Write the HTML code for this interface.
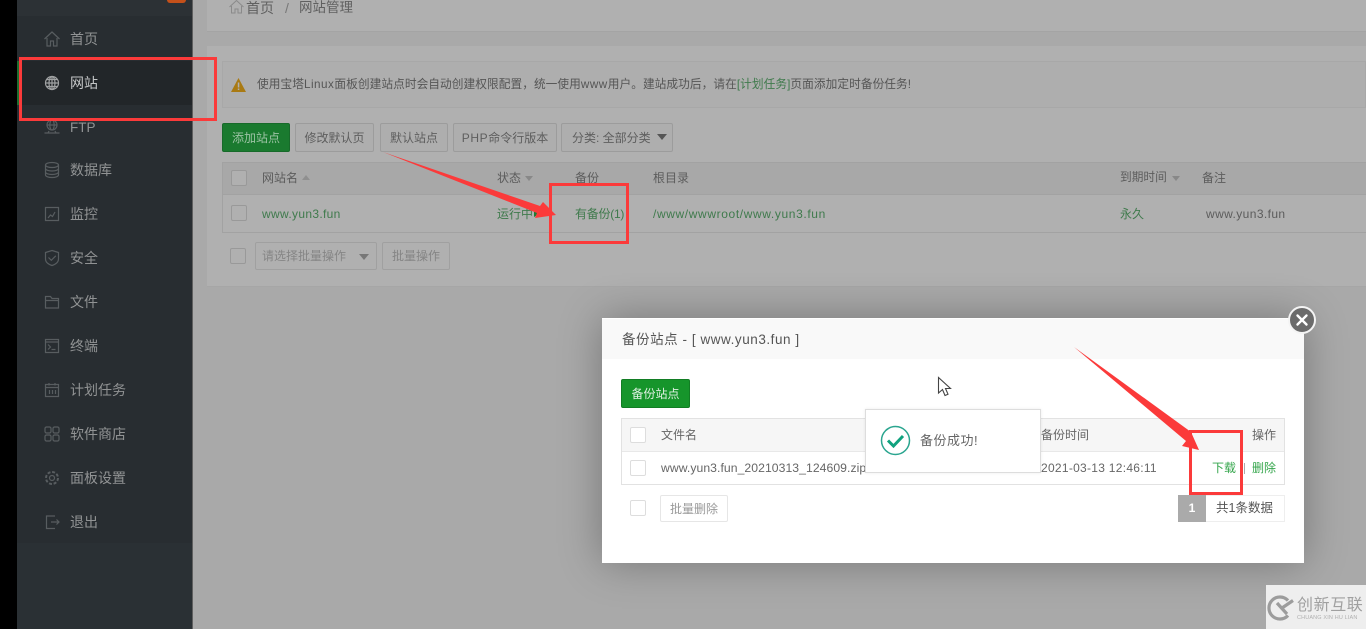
<!DOCTYPE html>
<html lang="zh">
<head>
<meta charset="utf-8">
<title>网站管理</title>
<style>
html{margin:0;padding:0;width:1366px;height:629px;overflow:hidden;background:#a9a9a9;}
body{margin:0;padding:0;width:1366px;height:629px;overflow:hidden;position:relative;font-family:"Liberation Sans","Noto Sans CJK SC",sans-serif;font-size:12px;color:#5c5c5c;filter:blur(.35px);}
.a{position:absolute;white-space:nowrap;box-sizing:border-box;}
.t{line-height:16px;}
.nav{color:#919394;font-size:14px;left:70px;line-height:20px;}
.ni{position:absolute;left:43px;width:18px;height:18px;fill:none;stroke:#585d60;stroke-width:1.2;}
.btn{border:1px solid #9c9c9c;border-radius:2px;text-align:center;line-height:28px;height:29px;color:#5e5e5e;background:#aeaeae;}
.cb{width:16px;height:16px;border:1px solid #999;border-radius:2px;background:#b0b0b0;}
.g{color:#3f7a4c;}
.tri{width:0;height:0;border-left:5px solid transparent;border-right:5px solid transparent;border-top:6px solid #888;}
.cb2{width:16px;height:16px;border:1px solid #ddd;border-radius:2px;background:#fff;}
.rb{border:3px solid #fb3a3a;}
.l{letter-spacing:.5px;}
</style>
</head>
<body>
<div class="a" style="left:0;top:0;width:17px;height:629px;background:#000"></div>
<div class="a" style="left:17px;top:0;width:175px;height:629px;background:#282d31"></div>
<div class="a" style="left:17px;top:0;width:175px;height:16px;background:#2c3135"></div>
<div class="a" style="left:17px;top:543px;width:175px;height:86px;background:#2a3034"></div>
<div class="a" style="left:192px;top:0;width:1px;height:629px;background:#5f5f5f"></div>
<div class="a" style="left:167px;top:0;width:19px;height:3px;background:#c4501a;border-radius:0 0 8px 8px"></div>

<div class="a" style="left:17px;top:61px;width:175px;height:44px;background:#222629"></div>
<div class="a" style="left:17px;top:61px;width:2px;height:44px;background:#1f6d2e"></div>

<div class="a nav" style="top:29px">首页</div>
<div class="a nav" style="top:73px;color:#c4c6c7">网站</div>
<div class="a nav" style="top:118px;font-size:13.500px">FTP</div>
<div class="a nav" style="top:160px">数据库</div>
<div class="a nav" style="top:204px">监控</div>
<div class="a nav" style="top:248px">安全</div>
<div class="a nav" style="top:292px">文件</div>
<div class="a nav" style="top:336px">终端</div>
<div class="a nav" style="top:380px">计划任务</div>
<div class="a nav" style="top:424px">软件商店</div>
<div class="a nav" style="top:468px">面板设置</div>
<div class="a nav" style="top:512px">退出</div>

<svg class="ni" style="top:30px" viewBox="0 0 18 18"><path d="M1.500 9L9 2l7.500 7M4 8v8h3.500v-5h3v5H14V8"/></svg>
<svg class="ni" style="top:74px;stroke:#a0a2a3" viewBox="0 0 18 18"><circle cx="9" cy="9" r="6.500"/><ellipse cx="9" cy="9" rx="3" ry="6.500"/><path d="M2.500 9h13M3.500 5.500h11M3.500 12.500h11M9 2.500v13"/></svg>
<svg class="ni" style="top:118px" viewBox="0 0 18 18"><circle cx="9" cy="7" r="5"/><ellipse cx="9" cy="7" rx="2.200" ry="5"/><path d="M4 7h10M1.500 15h15M6 13l-1 2M12 13l1 2"/></svg>
<svg class="ni" style="top:161px" viewBox="0 0 18 18"><ellipse cx="9" cy="4" rx="6.500" ry="2.500"/><path d="M2.500 4v10c0 1.400 3 2.500 6.500 2.500s6.500-1.100 6.500-2.500V4M2.500 7.500C2.500 9 5.500 10 9 10s6.500-1 6.500-2.500M2.500 11C2.500 12.500 5.500 13.500 9 13.500s6.500-1 6.500-2.500"/></svg>
<svg class="ni" style="top:205px" viewBox="0 0 18 18"><path d="M2.500 2.500h13v13h-13zM5 13l2.500-3 2 1.500L12 7"/></svg>
<svg class="ni" style="top:249px" viewBox="0 0 18 18"><path d="M9 1.500l6.500 2v6.500c0 3.500-3.500 5.500-6.500 6.500-3-1-6.500-3-6.500-6.500V3.500zM5.500 8.500l2.800 2.800 4.500-4.500"/></svg>
<svg class="ni" style="top:293px" viewBox="0 0 18 18"><path d="M2.500 15V3.500h5l1.500 2h6.500V15zM2.500 7.500h13"/></svg>
<svg class="ni" style="top:337px" viewBox="0 0 18 18"><path d="M2.500 2.500h13v13h-13zM2.500 5h13M5 7.500l2.500 2.500L5 12.500M8.500 12.500h4"/></svg>
<svg class="ni" style="top:381px" viewBox="0 0 18 18"><path d="M2.500 3.500h13v12h-13zM2.500 6.500h13M6 2v2.500M12 2v2.500M6.500 9v4M9.500 9v4M12.500 9v4"/></svg>
<svg class="ni" style="top:425px" viewBox="0 0 18 18"><rect x="2" y="2" width="6" height="6" rx="1.500"/><rect x="10" y="2" width="6" height="6" rx="1.500"/><rect x="2" y="10" width="6" height="6" rx="1.500"/><rect x="10" y="10" width="6" height="6" rx="1.500"/></svg>
<svg class="ni" style="top:469px" viewBox="0 0 18 18"><circle cx="9" cy="9" r="2.500"/><circle cx="9" cy="9" r="6" stroke-dasharray="3 1.700" stroke-width="2"/></svg>
<svg class="ni" style="top:513px" viewBox="0 0 18 18"><path d="M12 3H3.500v12.500H12M8 9h8M13.500 6.500L16 9l-2.500 2.500"/></svg>

<!-- breadcrumb -->
<div class="a" style="left:207px;top:0;width:1159px;height:32px;background:#b0b0b0;border-bottom:1px solid #a4a4a4"></div>
<svg class="a" style="left:229px;top:0" width="15" height="14" viewBox="0 0 15 14" fill="none" stroke="#8a8a8a"><path d="M.5 7L7.500.5l7 6.500M2.500 6v7h3.500V9h3v4h3.500V6"/></svg>
<div class="a" style="left:246px;top:-1px;font-size:14px;line-height:18px;color:#606060">首页</div>
<div class="a" style="left:285px;top:-1px;font-size:14px;line-height:18px;color:#777">/</div>
<div class="a" style="left:299px;top:-1px;font-size:13.500px;line-height:18px;color:#606060">网站管理</div>

<!-- main panel -->
<div class="a" style="left:207px;top:46px;width:1159px;height:241px;background:#b0b0b0;border-bottom:1px solid #a6a6a6"></div>
<div class="a" style="left:222px;top:61px;width:1144px;height:47px;background:#aeaeae;border:1px solid #a8a8a8"></div>
<svg class="a" style="left:231px;top:78px" width="15" height="14" viewBox="0 0 15 14"><path d="M7.500 0L15 14H0z" fill="#a97a13"/><rect x="6.800" y="4.500" width="1.500" height="5" fill="#b0b0b0"/><rect x="6.800" y="10.500" width="1.500" height="1.500" fill="#b0b0b0"/></svg>
<div class="a t" style="left:257px;top:77px;color:#555;font-size:11.700px;letter-spacing:.05px">使用宝塔<span class="l">Linux</span>面板创建站点时会自动创建权限配置，统一使用<span class="l">www</span>用户。建站成功后，请在<span class="g">[计划任务]</span>页面添加定时备份任务!</div>

<div class="a btn" style="left:222px;top:123px;width:68px;background:#1a7a2f;border-color:#176a2a;color:#9cc3a4">添加站点</div>
<div class="a btn" style="left:295px;top:123px;width:79px">修改默认页</div>
<div class="a btn" style="left:380px;top:123px;width:68px">默认站点</div>
<div class="a btn" style="left:453px;top:123px;width:104px"><span style="letter-spacing:.6px">PHP</span>命令行版本</div>
<div class="a btn" style="left:561px;top:123px;width:112px;text-align:left;padding-left:10px">分类: 全部分类</div>
<div class="a tri" style="left:657px;top:134px;border-top-color:#555"></div>

<div class="a" style="left:222px;top:162px;width:1144px;height:71px;background:#b0b0b0;border:1px solid #a2a2a2;border-right:0"></div>
<div class="a" style="left:223px;top:163px;width:1143px;height:32px;background:#a8a8a8;border-bottom:1px solid #a2a2a2"></div>
<div class="a cb" style="left:231px;top:170px"></div>
<div class="a cb" style="left:231px;top:205px"></div>
<div class="a t" style="left:262px;top:170px">网站名</div>
<div class="a" style="left:302px;top:175px;width:0;height:0;border-left:4px solid transparent;border-right:4px solid transparent;border-bottom:5px solid #8f8f8f"></div>
<div class="a t" style="left:497px;top:170px">状态</div>
<div class="a tri" style="left:525px;top:176px;border-left-width:4px;border-right-width:4px;border-top-width:5px"></div>
<div class="a t" style="left:575px;top:170px">备份</div>
<div class="a t" style="left:653px;top:170px">根目录</div>
<div class="a t" style="left:1120px;top:170px;font-size:11.700px">到期时间</div>
<div class="a tri" style="left:1172px;top:176px;border-left-width:4px;border-right-width:4px;border-top-width:5px"></div>
<div class="a t" style="left:1202px;top:170px">备注</div>

<div class="a t g" style="left:262px;top:206px;letter-spacing:.33px">www.yun3.fun</div>
<div class="a t g" style="left:497px;top:206px">运行中</div>
<div class="a" style="left:534px;top:209px;width:0;height:0;border-left:7px solid #1f7a33;border-top:4px solid transparent;border-bottom:4px solid transparent"></div>
<div class="a t g" style="left:575px;top:206px;letter-spacing:-.25px">有备份(1)</div>
<div class="a t g" style="left:653px;top:206px;letter-spacing:.62px">/www/wwwroot/www.yun3.fun</div>
<div class="a t g" style="left:1120px;top:206px">永久</div>
<div class="a t" style="left:1206px;top:206px;letter-spacing:.4px">www.yun3.fun</div>

<div class="a cb" style="left:230px;top:248px"></div>
<div class="a" style="left:255px;top:242px;width:122px;height:28px;border:1px solid #a0a0a0;border-radius:2px;line-height:27px;padding-left:6px;color:#858585">请选择批量操作</div>
<div class="a tri" style="left:359px;top:254px;border-top-color:#777"></div>
<div class="a" style="left:382px;top:242px;width:68px;height:28px;border:1px solid #a0a0a0;border-radius:2px;line-height:27px;text-align:center;color:#858585">批量操作</div>

<!-- red annotations -->
<div class="a rb" style="left:19px;top:57px;width:198px;height:64px"></div>
<div class="a rb" style="left:549px;top:183px;width:80px;height:61px"></div>
<svg class="a" style="left:0;top:0" width="1366" height="629" viewBox="0 0 1366 629">
<path d="M383 152L540 206L543 202L556 215L535 218L537 213Z" fill="#fb3a3a"/>
</svg>

<!-- modal -->
<div class="a" style="left:602px;top:318px;width:702px;height:245px;background:#fff;box-shadow:0 0 40px rgba(0,0,0,.3)"></div>
<div class="a" style="left:602px;top:319px;width:702px;height:40px;background:#f9f9f9"></div>
<div class="a" style="left:622px;top:330px;font-size:13.500px;line-height:20px;color:#555;letter-spacing:.55px">备份站点 - [ www.yun3.fun ]</div>
<div class="a" style="left:1288px;top:306px;width:28px;height:28px;border-radius:50%;background:#6b6b6b;border:2px solid #f4f4f4"></div>
<svg class="a" style="left:1288px;top:306px" width="28" height="28" viewBox="0 0 28 28"><path d="M9.500 9.500l9 9M18.500 9.500l-9 9" stroke="#fff" stroke-width="2.400" stroke-linecap="round"/></svg>

<div class="a" style="left:621px;top:379px;width:69px;height:29px;background:#16952b;border:1px solid #127d24;border-radius:2px;color:#dff0e2;text-align:center;line-height:28px">备份站点</div>

<div class="a" style="left:621px;top:418px;width:664px;height:67px;border:1px solid #e2e2e2;background:#fff"></div>
<div class="a" style="left:622px;top:419px;width:662px;height:33px;background:#f6f6f6;border-bottom:1px solid #e8e8e8"></div>
<div class="a cb2" style="left:630px;top:427px"></div>
<div class="a cb2" style="left:630px;top:460px"></div>
<div class="a t" style="left:661px;top:427px;color:#666">文件名</div>
<div class="a t" style="left:661px;top:460px;color:#666;font-size:12.200px;letter-spacing:.06px">www.yun3.fun_20210313_124609.zip</div>
<div class="a t" style="left:1041px;top:427px;color:#666">备份时间</div>
<div class="a t" style="left:1041px;top:460px;color:#666;letter-spacing:.28px">2021-03-13 12:46:11</div>
<div class="a t" style="left:1252px;top:427px;color:#666">操作</div>
<div class="a t" style="left:1212px;top:460px;color:#35a64c">下载</div>
<div class="a" style="left:1244px;top:463px;width:1px;height:11px;background:#aaa"></div>
<div class="a t" style="left:1252px;top:460px;color:#35a64c">删除</div>

<div class="a cb2" style="left:630px;top:500px"></div>
<div class="a" style="left:660px;top:495px;width:68px;height:27px;border:1px solid #e6e6e6;border-radius:2px;text-align:center;line-height:26px;color:#999">批量删除</div>
<div class="a" style="left:1178px;top:495px;width:107px;height:27px;border:1px solid #eee;background:#fff"></div>
<div class="a" style="left:1178px;top:495px;width:28px;height:27px;background:#aaa;color:#fff;text-align:center;line-height:27px;font-weight:bold">1</div>
<div class="a" style="left:1216px;top:495px;line-height:27px;color:#555;font-size:12.500px">共1条数据</div>

<!-- toast -->
<div class="a" style="left:865px;top:409px;width:176px;height:64px;background:#fff;border:1px solid #ddd;box-shadow:0 0 3px rgba(0,0,0,.08)"></div>
<svg class="a" style="left:880px;top:425px" width="31" height="31" viewBox="0 0 31 31" fill="none"><circle cx="15.500" cy="15.500" r="14" stroke="#2aa58f" stroke-width="1.500"/><path d="M8 15.500l5.500 5.500L23 11" stroke="#10a27e" stroke-width="3"/></svg>
<div class="a" style="left:920px;top:432px;font-size:13px;line-height:18px;color:#666;letter-spacing:.5px">备份成功!</div>

<!-- cursor -->
<svg class="a" style="left:937px;top:376px" width="15" height="22" viewBox="0 0 15 22"><path d="M1.500 1.500V17l4-3.500 2.500 6 3-1.300-2.500-5.700h5z" fill="#fff" stroke="#444" stroke-width="1.100"/></svg>

<!-- red box + arrow on modal -->
<div class="a rb" style="left:1189px;top:430px;width:54px;height:65px"></div>
<svg class="a" style="left:0;top:0" width="1366" height="629" viewBox="0 0 1366 629">
<path d="M1074 347L1191 432L1199 450L1182 446L1186 441Z" fill="#fb3a3a"/>
</svg>

<!-- watermark -->
<div class="a" style="left:1266px;top:585px;width:100px;height:44px;background:#eeeeee"></div>
<svg class="a" style="left:1267px;top:594px" width="28" height="28" viewBox="0 0 28 28" fill="none"><path d="M21 6.500A11 11 0 1 0 21 21.500" stroke="#9c9c9c" stroke-width="3.200"/><path d="M10 9l10 11M26 6.500L15 14" stroke="#9c9c9c" stroke-width="3.200"/></svg>
<div class="a" style="left:1297px;top:596px;font-size:16px;line-height:20px;color:#a0a0a0;letter-spacing:.6px">创新互联</div>
<div class="a" style="left:1297px;top:614px;font-size:5.500px;line-height:8px;color:#b0b0b0;letter-spacing:.15px">CHUANG XIN HU LIAN</div>
</body>
</html>
